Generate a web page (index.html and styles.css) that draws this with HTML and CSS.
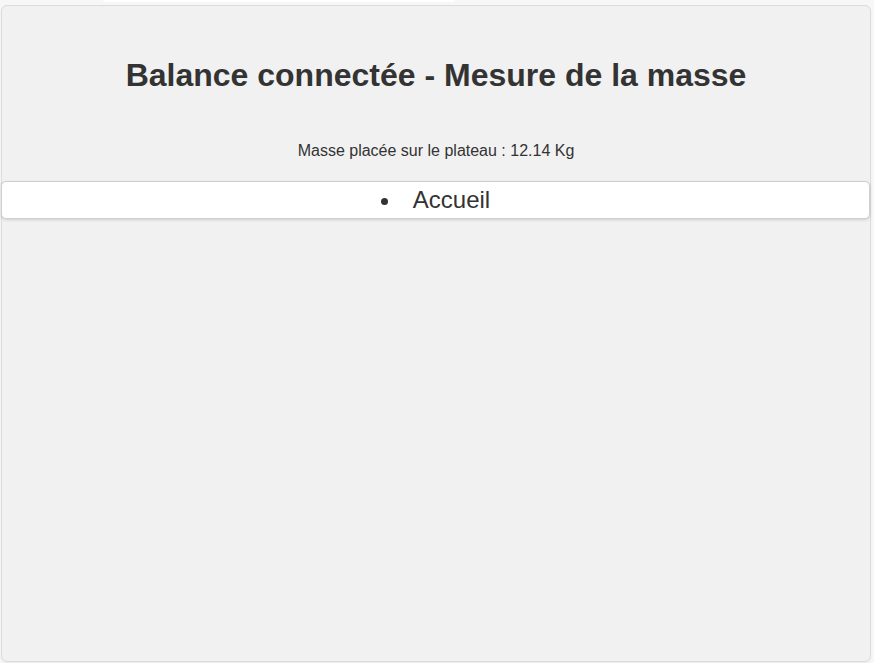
FILE: index.html
```html
<!DOCTYPE html>
<html lang="fr">
<head>
<meta charset="utf-8">
<title>Balance connectée</title>
<link rel="stylesheet" href="styles.css">
</head>
<body>
<div class="top-strip"></div>
<div class="card">
  <h1 class="title">Balance connectée - Mesure de la masse</h1>
  <p class="mass">Masse placée sur le plateau : 12.14 Kg</p>
  <ul class="nav">
    <li class="nav-item">Accueil</li>
  </ul>
</div>
</body>
</html>
```
FILE: styles.css
```css
html, body {
  margin: 0;
  padding: 0;
  height: 100%;
}
body {
  background: #f7f7f7;
  font-family: "Liberation Sans", Arial, sans-serif;
  color: #333;
  display: flex;
  flex-direction: column;
}
.top-strip {
  height: 2px;
  width: 352px;
  margin-left: 103px;
  background: #fff;
  border-radius: 0 0 6px 6px;
  flex: none;
}
.card {
  margin: 3px 3px 1px 1px;
  flex: 1;
  background: #f1f1f1;
  border: 1px solid #dcdcdc;
  border-radius: 6px;
  box-shadow: 0 1px 2px rgba(0,0,0,0.06);
}
.title {
  margin: 51px 0 0;
  font-size: 32px;
  font-weight: bold;
  text-align: center;
  line-height: 37px;
}
.mass {
  margin: 48px 0 0;
  font-size: 16px;
  line-height: 18px;
  text-align: center;
}
.nav {
  margin: 21px 0 0 -1px;
  padding: 0;
  background: #fff;
  border: 1px solid #cfcfcf;
  border-radius: 5px;
  box-shadow: 0 1px 3px rgba(0,0,0,0.15);
  list-style: disc inside;
  text-align: center;
}
.nav-item {
  font-size: 24px;
  line-height: 36px;
}
```
